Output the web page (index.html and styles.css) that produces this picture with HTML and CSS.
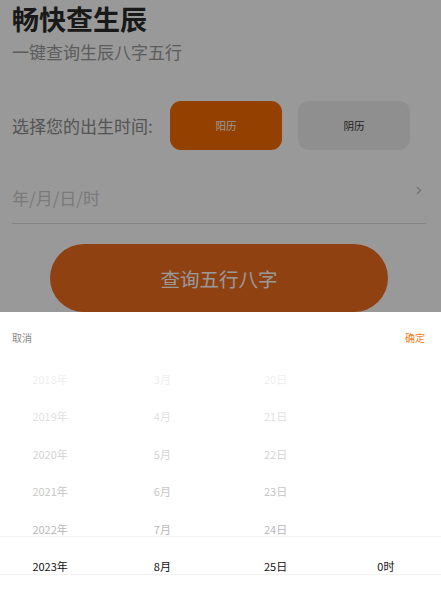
FILE: index.html
```html
<!DOCTYPE html>
<html lang="zh-CN">

<head>
    <meta charset="UTF-8">
    <meta name="viewport" content="width=device-width, initial-scale=1.0">
    <title>畅快查生辰</title>
    <link rel="stylesheet" href="styles.css">
</head>

<body>
    <div class="page">
        <h1 class="title">畅快查生辰</h1>
        <p class="subtitle">一键查询生辰八字五行</p>

        <div class="calendar-row">
            <span class="calendar-label">选择您的出生时间:</span>
            <button class="calendar-btn active">阳历</button>
            <button class="calendar-btn">阴历</button>
        </div>

        <div class="date-field">
            <span class="placeholder">年/月/日/时</span>
            <svg class="arrow" width="6" height="9" viewBox="0 0 6 9">
                <path d="M1 1 L4.5 4.5 L1 8" fill="none" stroke="#bbb" stroke-width="1.2" />
            </svg>
        </div>

        <button class="submit">查询五行八字</button>
    </div>

    <div class="mask"></div>

    <div class="picker">
        <div class="picker-head">
            <span class="cancel">取消</span>
            <span class="confirm">确定</span>
        </div>
        <div class="picker-body">
            <ul class="column year">
                <li>2018年</li>
                <li>2019年</li>
                <li>2020年</li>
                <li>2021年</li>
                <li>2022年</li>
                <li class="selected">2023年</li>
            </ul>
            <ul class="column month">
                <li>3月</li>
                <li>4月</li>
                <li>5月</li>
                <li>6月</li>
                <li>7月</li>
                <li class="selected">8月</li>
            </ul>
            <ul class="column">
                <li>20日</li>
                <li>21日</li>
                <li>22日</li>
                <li>23日</li>
                <li>24日</li>
                <li class="selected">25日</li>
            </ul>
            <ul class="column">
                <li></li>
                <li></li>
                <li></li>
                <li></li>
                <li></li>
                <li class="selected">0时</li>
            </ul>
            <div class="fade"></div>
            <div class="frame"></div>
        </div>
    </div>
</body>

</html>
```

FILE: styles.css
```css
* {
    margin: 0;
    padding: 0;
    box-sizing: border-box;
}

body {
    font-family: "Noto Sans CJK SC", "Noto Sans", sans-serif;
    background: #fff;
    overflow: hidden;
}

button {
    font-family: inherit;
    border: none;
    outline: none;
}

.page {
    padding: 0 15px 0 12px;
}

.title {
    font-size: 27px;
    line-height: 38px;
    font-weight: bold;
    color: #2b2b2b;
}

.subtitle {
    font-size: 17px;
    line-height: 26px;
    margin-top: 1px;
    color: #999;
}

.calendar-row {
    display: flex;
    align-items: center;
    margin-top: 36px;
}

.calendar-label {
    width: 158px;
    font-size: 17px;
    color: #8c8c8c;
}

.calendar-btn {
    width: 112px;
    height: 49px;
    border-radius: 11px;
    background: #eee;
    color: #333;
    font-size: 10.5px;
    margin-right: 16px;
}

.calendar-btn.active {
    background: #f56c00;
    color: #fff;
}

.date-field {
    display: flex;
    align-items: center;
    justify-content: space-between;
    height: 52px;
    margin-top: 22px;
    border-bottom: 1px solid #ddd;
}

.placeholder {
    font-size: 17px;
    color: #ccc;
}

.arrow {
    margin: 0 4px 14px 0;
}

.submit {
    display: block;
    width: 338px;
    height: 68px;
    margin: 20px auto 0;
    border-radius: 34px;
    background: #ee6d1d;
    color: #fff;
    font-size: 19.5px;
}

.mask {
    position: fixed;
    top: 0;
    left: 0;
    right: 0;
    bottom: 0;
    background: rgba(0, 0, 0, 0.4);
}

.picker {
    position: fixed;
    top: 312px;
    left: 0;
    right: 0;
    bottom: 0;
    background: #fff;
    overflow: hidden;
}

.picker-head {
    display: flex;
    justify-content: space-between;
    height: 49px;
    line-height: 47px;
    padding: 2px 16px 0 12px;
    font-size: 10px;
}

.cancel {
    color: #888;
}

.confirm {
    color: #f77a1c;
}

.picker-body {
    position: relative;
    display: flex;
}

.column {
    width: 25%;
    list-style-type: none;
    text-align: center;
}

.column.year {
    padding-right: 10px;
}

.column.month {
    padding-right: 6px;
}

.column li {
    height: 37.4px;
    line-height: 37.4px;
    font-size: 11px;
    color: #888;
}

.column li.selected {
    color: #111;
}

.fade {
    position: absolute;
    top: 0;
    left: 0;
    right: 0;
    height: 175px;
    background: linear-gradient(180deg, rgba(255, 255, 255, 0.9), rgba(255, 255, 255, 0.38));
}

.frame {
    position: absolute;
    top: 175px;
    left: 0;
    right: 0;
    height: 39px;
    border-top: 1px solid #f2f2f2;
    border-bottom: 1px solid #f2f2f2;
}
```
